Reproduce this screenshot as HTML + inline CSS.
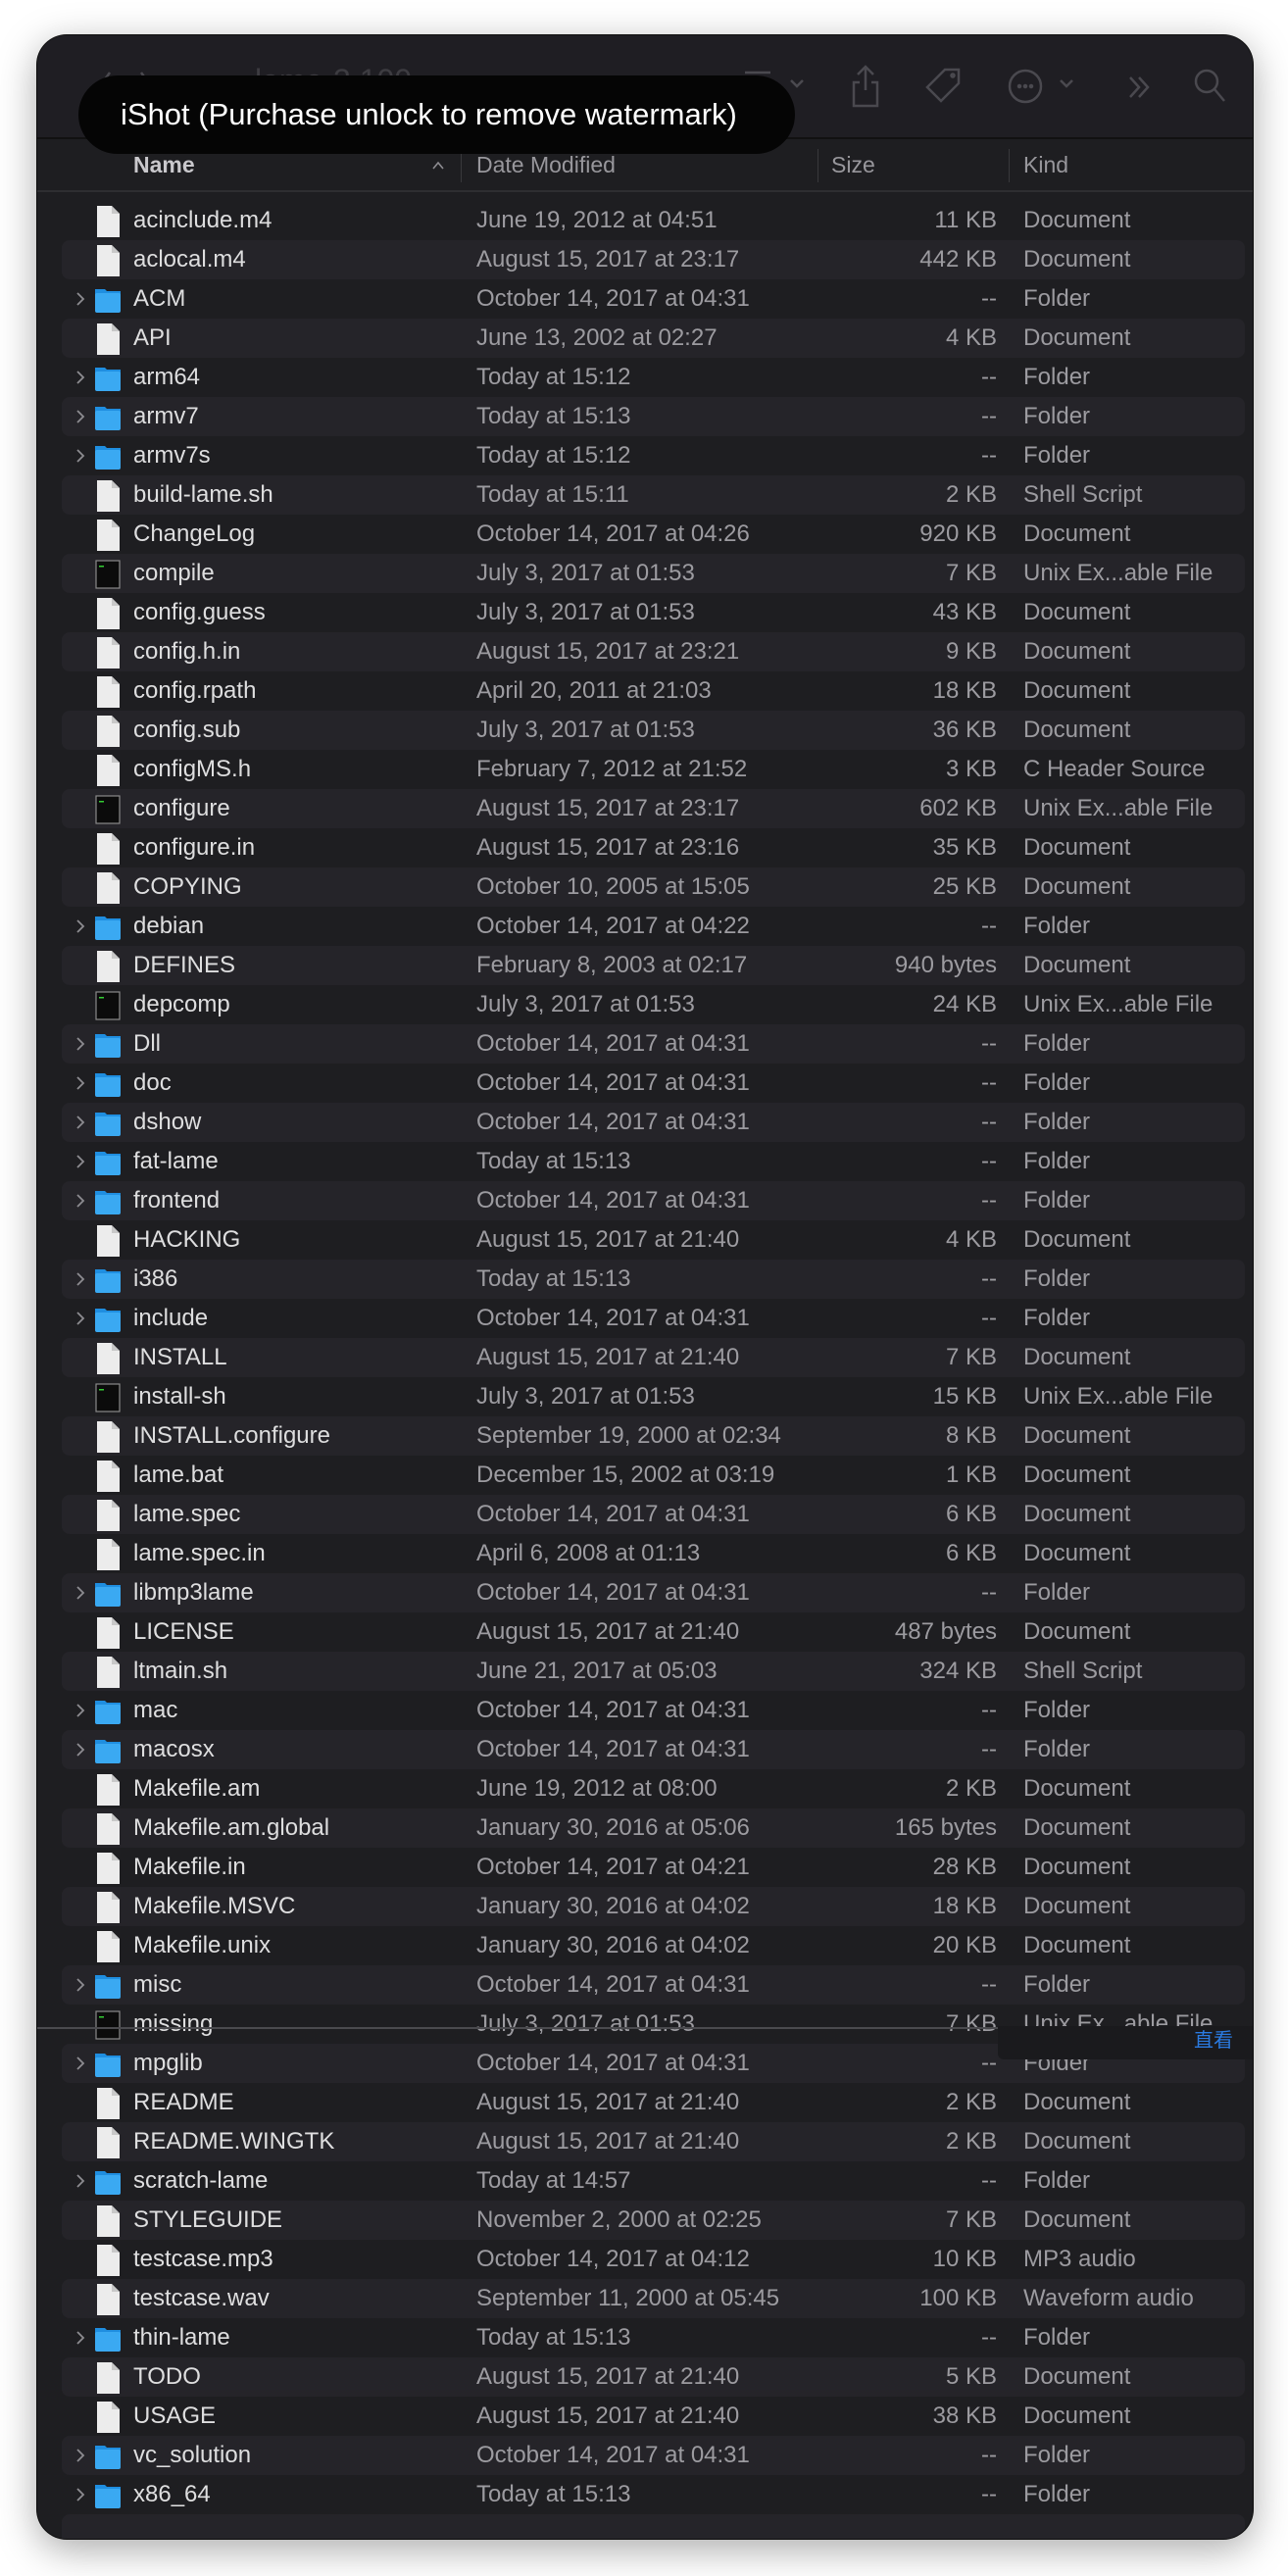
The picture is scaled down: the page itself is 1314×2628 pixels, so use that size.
<!DOCTYPE html>
<html><head><meta charset="utf-8">
<style>
html,body{margin:0;padding:0;background:#fff;width:1314px;height:2628px;overflow:hidden}
body{font-family:"Liberation Sans","Noto Sans CJK SC",sans-serif}
.win{position:absolute;left:38px;top:36px;width:1240px;height:2554px;background:#1e1e21;border-radius:30px;overflow:hidden;box-shadow:0 10px 40px rgba(0,0,0,.35),0 0 0 1px #111}
.tb{position:absolute;left:0;top:0;width:1240px;height:104px;background:#1f1e23;border-bottom:2px solid #111}
.hd{position:absolute;left:0;top:106px;width:1240px;height:52px;border-bottom:2px solid #2e2e31}
.hd span{position:absolute;top:13px;font-size:23px;color:#98979c}
.sep{position:absolute;top:10px;width:1px;height:34px;background:#38383b}
.list{position:absolute;left:0;top:169px;width:1240px}
.r{position:relative;height:40px;font-size:24px;line-height:40px;white-space:nowrap}
.r.s::before{content:"";position:absolute;left:25px;right:8px;top:0;bottom:0;background:#252429;border-radius:8px}
.r>*{position:absolute}
.n{left:98px;color:#dededf}
.d{left:448px;color:#9c9ba0}
.z{left:780px;width:199px;text-align:right;color:#9c9ba0}
.k{left:1006px;color:#9c9ba0}
.c{left:38px;top:12px}
.i{left:58px;top:5px}
.wm{position:absolute;left:80px;top:77px;width:731px;height:80px;background:#050505;border-radius:40px;color:#fff;font-size:31px;line-height:80px;padding-left:43px;box-sizing:border-box;white-space:nowrap}
.tic{position:absolute;stroke:#4a494f;fill:none;stroke-width:2.5}
</style></head><body>
<svg width="0" height="0" style="position:absolute">
<defs>
<symbol id="doc" viewBox="0 0 28 32"><path d="M3 0h15l8 8v24H3z" fill="#ececec"/><path d="M18 0v8h8" fill="#c8c8c8"/></symbol>
<symbol id="fold" viewBox="0 0 28 32"><path d="M1 5h10l2 2h14v4H1z" fill="#1f8ee0"/><rect x="1" y="9" width="26" height="20" rx="2" fill="#3aa9f2"/></symbol>
<symbol id="exe" viewBox="0 0 28 32"><rect x="2" y="2" width="24" height="28" fill="#0b0b0b" stroke="#8a8a8a" stroke-width="1.2"/><rect x="5" y="7" width="5" height="1.5" fill="#3c3"/></symbol>
<symbol id="chev" viewBox="0 0 12 16"><path d="M3 2l6 6-6 6" fill="none" stroke="#8d8c91" stroke-width="1.8"/></symbol>
</defs></svg>
<div class="win">
<div class="tb">
<svg class="tic" style="left:60px;top:34px" width="60" height="36"><path d="M14 4L4 18l10 14M46 4l10 14-10 14"/></svg>
<div style="position:absolute;left:222px;top:28px;font-size:32px;color:#3d3c41">lame-3.100</div>
<svg class="tic" style="left:720px;top:34px" width="30" height="38"><path d="M2 4h26M4 14h6v6H4zM12 14h6v6h-6zM20 14h6v6h-6zM4 24h6v6H4zM12 24h6v6h-6zM20 24h6v6h-6z"/></svg>
<svg class="tic" style="left:767px;top:44px" width="16" height="12"><path d="M2 2l6 6 6-6"/></svg>
<svg class="tic" style="left:830px;top:30px" width="30" height="44"><path d="M15 2v24M7 10l8-8 8 8M9 18H3v24h24V18h-6"/></svg>
<svg class="tic" style="left:904px;top:32px" width="40" height="40"><path d="M22 3l14 0 0 14-18 18-14-14z"/><circle cx="30" cy="9" r="1.5"/></svg>
<svg class="tic" style="left:990px;top:32px" width="36" height="40"><circle cx="18" cy="20" r="16"/><circle cx="12" cy="20" r="1" fill="#4a494f"/><circle cx="18" cy="20" r="1" fill="#4a494f"/><circle cx="24" cy="20" r="1" fill="#4a494f"/></svg>
<svg class="tic" style="left:1042px;top:44px" width="16" height="12"><path d="M2 2l6 6 6-6"/></svg>
<svg class="tic" style="left:1112px;top:40px" width="26" height="26"><path d="M3 3l9 10-9 10M12 3l9 10-9 10"/></svg>
<svg class="tic" style="left:1178px;top:32px" width="36" height="40"><circle cx="15" cy="15" r="11"/><path d="M23 23l10 12"/></svg>
</div>
<div class="hd">
<span style="left:98px;color:#c9c8cc;font-weight:bold">Name</span>
<svg style="position:absolute;left:402px;top:22px" width="14" height="10"><path d="M2 8l5-6 5 6" fill="none" stroke="#8d8c91" stroke-width="1.6"/></svg>
<div class="sep" style="left:432px"></div><span style="left:448px">Date Modified</span>
<div class="sep" style="left:796px"></div><span style="left:810px">Size</span>
<div class="sep" style="left:991px"></div><span style="left:1006px">Kind</span>
</div>
<div class="list">
<div class="r"><svg class="i" width="28" height="32"><use href="#doc"/></svg><span class="n">acinclude.m4</span><span class="d">June 19, 2012 at 04:51</span><span class="z">11 KB</span><span class="k">Document</span></div>
<div class="r s"><svg class="i" width="28" height="32"><use href="#doc"/></svg><span class="n">aclocal.m4</span><span class="d">August 15, 2017 at 23:17</span><span class="z">442 KB</span><span class="k">Document</span></div>
<div class="r"><svg class="c" width="12" height="16"><use href="#chev"/></svg><svg class="i" width="28" height="32"><use href="#fold"/></svg><span class="n">ACM</span><span class="d">October 14, 2017 at 04:31</span><span class="z">--</span><span class="k">Folder</span></div>
<div class="r s"><svg class="i" width="28" height="32"><use href="#doc"/></svg><span class="n">API</span><span class="d">June 13, 2002 at 02:27</span><span class="z">4 KB</span><span class="k">Document</span></div>
<div class="r"><svg class="c" width="12" height="16"><use href="#chev"/></svg><svg class="i" width="28" height="32"><use href="#fold"/></svg><span class="n">arm64</span><span class="d">Today at 15:12</span><span class="z">--</span><span class="k">Folder</span></div>
<div class="r s"><svg class="c" width="12" height="16"><use href="#chev"/></svg><svg class="i" width="28" height="32"><use href="#fold"/></svg><span class="n">armv7</span><span class="d">Today at 15:13</span><span class="z">--</span><span class="k">Folder</span></div>
<div class="r"><svg class="c" width="12" height="16"><use href="#chev"/></svg><svg class="i" width="28" height="32"><use href="#fold"/></svg><span class="n">armv7s</span><span class="d">Today at 15:12</span><span class="z">--</span><span class="k">Folder</span></div>
<div class="r s"><svg class="i" width="28" height="32"><use href="#doc"/></svg><span class="n">build-lame.sh</span><span class="d">Today at 15:11</span><span class="z">2 KB</span><span class="k">Shell Script</span></div>
<div class="r"><svg class="i" width="28" height="32"><use href="#doc"/></svg><span class="n">ChangeLog</span><span class="d">October 14, 2017 at 04:26</span><span class="z">920 KB</span><span class="k">Document</span></div>
<div class="r s"><svg class="i" width="28" height="32"><use href="#exe"/></svg><span class="n">compile</span><span class="d">July 3, 2017 at 01:53</span><span class="z">7 KB</span><span class="k">Unix Ex...able File</span></div>
<div class="r"><svg class="i" width="28" height="32"><use href="#doc"/></svg><span class="n">config.guess</span><span class="d">July 3, 2017 at 01:53</span><span class="z">43 KB</span><span class="k">Document</span></div>
<div class="r s"><svg class="i" width="28" height="32"><use href="#doc"/></svg><span class="n">config.h.in</span><span class="d">August 15, 2017 at 23:21</span><span class="z">9 KB</span><span class="k">Document</span></div>
<div class="r"><svg class="i" width="28" height="32"><use href="#doc"/></svg><span class="n">config.rpath</span><span class="d">April 20, 2011 at 21:03</span><span class="z">18 KB</span><span class="k">Document</span></div>
<div class="r s"><svg class="i" width="28" height="32"><use href="#doc"/></svg><span class="n">config.sub</span><span class="d">July 3, 2017 at 01:53</span><span class="z">36 KB</span><span class="k">Document</span></div>
<div class="r"><svg class="i" width="28" height="32"><use href="#doc"/></svg><span class="n">configMS.h</span><span class="d">February 7, 2012 at 21:52</span><span class="z">3 KB</span><span class="k">C Header Source</span></div>
<div class="r s"><svg class="i" width="28" height="32"><use href="#exe"/></svg><span class="n">configure</span><span class="d">August 15, 2017 at 23:17</span><span class="z">602 KB</span><span class="k">Unix Ex...able File</span></div>
<div class="r"><svg class="i" width="28" height="32"><use href="#doc"/></svg><span class="n">configure.in</span><span class="d">August 15, 2017 at 23:16</span><span class="z">35 KB</span><span class="k">Document</span></div>
<div class="r s"><svg class="i" width="28" height="32"><use href="#doc"/></svg><span class="n">COPYING</span><span class="d">October 10, 2005 at 15:05</span><span class="z">25 KB</span><span class="k">Document</span></div>
<div class="r"><svg class="c" width="12" height="16"><use href="#chev"/></svg><svg class="i" width="28" height="32"><use href="#fold"/></svg><span class="n">debian</span><span class="d">October 14, 2017 at 04:22</span><span class="z">--</span><span class="k">Folder</span></div>
<div class="r s"><svg class="i" width="28" height="32"><use href="#doc"/></svg><span class="n">DEFINES</span><span class="d">February 8, 2003 at 02:17</span><span class="z">940 bytes</span><span class="k">Document</span></div>
<div class="r"><svg class="i" width="28" height="32"><use href="#exe"/></svg><span class="n">depcomp</span><span class="d">July 3, 2017 at 01:53</span><span class="z">24 KB</span><span class="k">Unix Ex...able File</span></div>
<div class="r s"><svg class="c" width="12" height="16"><use href="#chev"/></svg><svg class="i" width="28" height="32"><use href="#fold"/></svg><span class="n">Dll</span><span class="d">October 14, 2017 at 04:31</span><span class="z">--</span><span class="k">Folder</span></div>
<div class="r"><svg class="c" width="12" height="16"><use href="#chev"/></svg><svg class="i" width="28" height="32"><use href="#fold"/></svg><span class="n">doc</span><span class="d">October 14, 2017 at 04:31</span><span class="z">--</span><span class="k">Folder</span></div>
<div class="r s"><svg class="c" width="12" height="16"><use href="#chev"/></svg><svg class="i" width="28" height="32"><use href="#fold"/></svg><span class="n">dshow</span><span class="d">October 14, 2017 at 04:31</span><span class="z">--</span><span class="k">Folder</span></div>
<div class="r"><svg class="c" width="12" height="16"><use href="#chev"/></svg><svg class="i" width="28" height="32"><use href="#fold"/></svg><span class="n">fat-lame</span><span class="d">Today at 15:13</span><span class="z">--</span><span class="k">Folder</span></div>
<div class="r s"><svg class="c" width="12" height="16"><use href="#chev"/></svg><svg class="i" width="28" height="32"><use href="#fold"/></svg><span class="n">frontend</span><span class="d">October 14, 2017 at 04:31</span><span class="z">--</span><span class="k">Folder</span></div>
<div class="r"><svg class="i" width="28" height="32"><use href="#doc"/></svg><span class="n">HACKING</span><span class="d">August 15, 2017 at 21:40</span><span class="z">4 KB</span><span class="k">Document</span></div>
<div class="r s"><svg class="c" width="12" height="16"><use href="#chev"/></svg><svg class="i" width="28" height="32"><use href="#fold"/></svg><span class="n">i386</span><span class="d">Today at 15:13</span><span class="z">--</span><span class="k">Folder</span></div>
<div class="r"><svg class="c" width="12" height="16"><use href="#chev"/></svg><svg class="i" width="28" height="32"><use href="#fold"/></svg><span class="n">include</span><span class="d">October 14, 2017 at 04:31</span><span class="z">--</span><span class="k">Folder</span></div>
<div class="r s"><svg class="i" width="28" height="32"><use href="#doc"/></svg><span class="n">INSTALL</span><span class="d">August 15, 2017 at 21:40</span><span class="z">7 KB</span><span class="k">Document</span></div>
<div class="r"><svg class="i" width="28" height="32"><use href="#exe"/></svg><span class="n">install-sh</span><span class="d">July 3, 2017 at 01:53</span><span class="z">15 KB</span><span class="k">Unix Ex...able File</span></div>
<div class="r s"><svg class="i" width="28" height="32"><use href="#doc"/></svg><span class="n">INSTALL.configure</span><span class="d">September 19, 2000 at 02:34</span><span class="z">8 KB</span><span class="k">Document</span></div>
<div class="r"><svg class="i" width="28" height="32"><use href="#doc"/></svg><span class="n">lame.bat</span><span class="d">December 15, 2002 at 03:19</span><span class="z">1 KB</span><span class="k">Document</span></div>
<div class="r s"><svg class="i" width="28" height="32"><use href="#doc"/></svg><span class="n">lame.spec</span><span class="d">October 14, 2017 at 04:31</span><span class="z">6 KB</span><span class="k">Document</span></div>
<div class="r"><svg class="i" width="28" height="32"><use href="#doc"/></svg><span class="n">lame.spec.in</span><span class="d">April 6, 2008 at 01:13</span><span class="z">6 KB</span><span class="k">Document</span></div>
<div class="r s"><svg class="c" width="12" height="16"><use href="#chev"/></svg><svg class="i" width="28" height="32"><use href="#fold"/></svg><span class="n">libmp3lame</span><span class="d">October 14, 2017 at 04:31</span><span class="z">--</span><span class="k">Folder</span></div>
<div class="r"><svg class="i" width="28" height="32"><use href="#doc"/></svg><span class="n">LICENSE</span><span class="d">August 15, 2017 at 21:40</span><span class="z">487 bytes</span><span class="k">Document</span></div>
<div class="r s"><svg class="i" width="28" height="32"><use href="#doc"/></svg><span class="n">ltmain.sh</span><span class="d">June 21, 2017 at 05:03</span><span class="z">324 KB</span><span class="k">Shell Script</span></div>
<div class="r"><svg class="c" width="12" height="16"><use href="#chev"/></svg><svg class="i" width="28" height="32"><use href="#fold"/></svg><span class="n">mac</span><span class="d">October 14, 2017 at 04:31</span><span class="z">--</span><span class="k">Folder</span></div>
<div class="r s"><svg class="c" width="12" height="16"><use href="#chev"/></svg><svg class="i" width="28" height="32"><use href="#fold"/></svg><span class="n">macosx</span><span class="d">October 14, 2017 at 04:31</span><span class="z">--</span><span class="k">Folder</span></div>
<div class="r"><svg class="i" width="28" height="32"><use href="#doc"/></svg><span class="n">Makefile.am</span><span class="d">June 19, 2012 at 08:00</span><span class="z">2 KB</span><span class="k">Document</span></div>
<div class="r s"><svg class="i" width="28" height="32"><use href="#doc"/></svg><span class="n">Makefile.am.global</span><span class="d">January 30, 2016 at 05:06</span><span class="z">165 bytes</span><span class="k">Document</span></div>
<div class="r"><svg class="i" width="28" height="32"><use href="#doc"/></svg><span class="n">Makefile.in</span><span class="d">October 14, 2017 at 04:21</span><span class="z">28 KB</span><span class="k">Document</span></div>
<div class="r s"><svg class="i" width="28" height="32"><use href="#doc"/></svg><span class="n">Makefile.MSVC</span><span class="d">January 30, 2016 at 04:02</span><span class="z">18 KB</span><span class="k">Document</span></div>
<div class="r"><svg class="i" width="28" height="32"><use href="#doc"/></svg><span class="n">Makefile.unix</span><span class="d">January 30, 2016 at 04:02</span><span class="z">20 KB</span><span class="k">Document</span></div>
<div class="r s"><svg class="c" width="12" height="16"><use href="#chev"/></svg><svg class="i" width="28" height="32"><use href="#fold"/></svg><span class="n">misc</span><span class="d">October 14, 2017 at 04:31</span><span class="z">--</span><span class="k">Folder</span></div>
<div class="r"><svg class="i" width="28" height="32"><use href="#exe"/></svg><span class="n">missing</span><span class="d">July 3, 2017 at 01:53</span><span class="z">7 KB</span><span class="k">Unix Ex...able File</span></div>
<div class="r s"><svg class="c" width="12" height="16"><use href="#chev"/></svg><svg class="i" width="28" height="32"><use href="#fold"/></svg><span class="n">mpglib</span><span class="d">October 14, 2017 at 04:31</span><span class="z">--</span><span class="k">Folder</span></div>
<div class="r"><svg class="i" width="28" height="32"><use href="#doc"/></svg><span class="n">README</span><span class="d">August 15, 2017 at 21:40</span><span class="z">2 KB</span><span class="k">Document</span></div>
<div class="r s"><svg class="i" width="28" height="32"><use href="#doc"/></svg><span class="n">README.WINGTK</span><span class="d">August 15, 2017 at 21:40</span><span class="z">2 KB</span><span class="k">Document</span></div>
<div class="r"><svg class="c" width="12" height="16"><use href="#chev"/></svg><svg class="i" width="28" height="32"><use href="#fold"/></svg><span class="n">scratch-lame</span><span class="d">Today at 14:57</span><span class="z">--</span><span class="k">Folder</span></div>
<div class="r s"><svg class="i" width="28" height="32"><use href="#doc"/></svg><span class="n">STYLEGUIDE</span><span class="d">November 2, 2000 at 02:25</span><span class="z">7 KB</span><span class="k">Document</span></div>
<div class="r"><svg class="i" width="28" height="32"><use href="#doc"/></svg><span class="n">testcase.mp3</span><span class="d">October 14, 2017 at 04:12</span><span class="z">10 KB</span><span class="k">MP3 audio</span></div>
<div class="r s"><svg class="i" width="28" height="32"><use href="#doc"/></svg><span class="n">testcase.wav</span><span class="d">September 11, 2000 at 05:45</span><span class="z">100 KB</span><span class="k">Waveform audio</span></div>
<div class="r"><svg class="c" width="12" height="16"><use href="#chev"/></svg><svg class="i" width="28" height="32"><use href="#fold"/></svg><span class="n">thin-lame</span><span class="d">Today at 15:13</span><span class="z">--</span><span class="k">Folder</span></div>
<div class="r s"><svg class="i" width="28" height="32"><use href="#doc"/></svg><span class="n">TODO</span><span class="d">August 15, 2017 at 21:40</span><span class="z">5 KB</span><span class="k">Document</span></div>
<div class="r"><svg class="i" width="28" height="32"><use href="#doc"/></svg><span class="n">USAGE</span><span class="d">August 15, 2017 at 21:40</span><span class="z">38 KB</span><span class="k">Document</span></div>
<div class="r s"><svg class="c" width="12" height="16"><use href="#chev"/></svg><svg class="i" width="28" height="32"><use href="#fold"/></svg><span class="n">vc_solution</span><span class="d">October 14, 2017 at 04:31</span><span class="z">--</span><span class="k">Folder</span></div>
<div class="r"><svg class="c" width="12" height="16"><use href="#chev"/></svg><svg class="i" width="28" height="32"><use href="#fold"/></svg><span class="n">x86_64</span><span class="d">Today at 15:13</span><span class="z">--</span><span class="k">Folder</span></div>
<div class="r s"></div>
</div>
<div style="position:absolute;left:0;top:2032px;width:1240px;height:2px;background:#4a4a4e"></div>
<div style="position:absolute;left:980px;top:2031px;width:262px;height:34px;background:#1a1a1d;border-radius:0 0 0 6px;color:#2a7ae0;font-size:20px;line-height:30px;padding-left:200px;box-sizing:border-box">直看</div>
</div>
<div class="wm">iShot (Purchase unlock to remove watermark)</div>
</body></html>
